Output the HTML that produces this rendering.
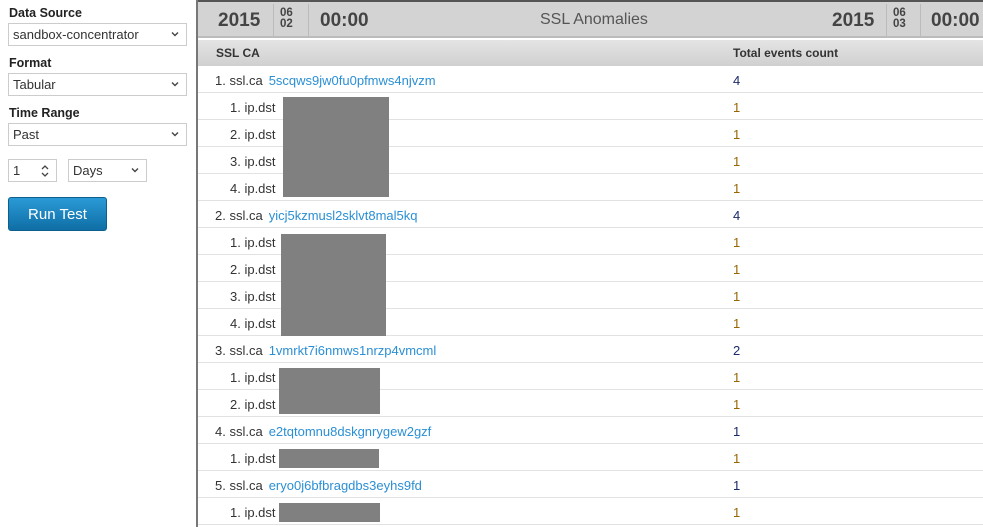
<!DOCTYPE html>
<html><head><meta charset="utf-8"><style>
*{margin:0;padding:0;box-sizing:border-box}
body{width:983px;height:527px;overflow:hidden;background:#fff;font-family:"Liberation Sans",sans-serif;color:#333;position:relative}
.lbl{position:absolute;left:9px;font-weight:bold;font-size:12.5px;color:#222}
.sel{position:absolute;border:1px solid #ccc;background:#fff;font-size:13px;color:#333;padding:0 0 0 4px;line-height:21px;height:23px}
.sel .ch{position:absolute;right:5px;top:4px;width:12px;height:12px}
.btn{position:absolute;left:8px;top:197px;width:99px;height:34px;border-radius:3px;background:linear-gradient(#2a9ad6,#0f6ea5);color:#fff;font-size:15px;text-align:center;line-height:34px;border:1px solid #0d5f8e}
.side{position:absolute;left:196px;top:0;width:2px;height:527px;background:#777}
.top{position:absolute;left:198px;top:0;width:785px;height:38px;background:#d3d3d3;border-top:2px solid #555;border-bottom:2px solid #bbb}
.yr{position:absolute;font-weight:bold;font-size:19px;color:#444;top:8px}
.md{position:absolute;font-weight:bold;font-size:11.5px;color:#444;line-height:11px;top:6px;text-align:center}
.vs{position:absolute;top:2px;width:1px;height:32px;background:#bbb}
.th{position:absolute;left:198px;top:40px;width:785px;height:26px;background:linear-gradient(#e4e4e4,#d0d0d0);font-weight:bold;font-size:12px;color:#333;line-height:27px}
.row{position:absolute;left:198px;width:785px;height:27px;border-bottom:1px solid #e2e2e2;font-size:13px;line-height:29px}
.row .a{position:absolute;color:#333}
.row .l{color:#2a8fd4;margin-left:6px}
.row .c{position:absolute;left:535px}
.box{position:absolute;background:#808080}
</style></head><body>
<svg width="0" height="0" style="position:absolute"><defs><symbol id="cv" viewBox="0 0 12 12"><path d="M3 4.5 L6 7.5 L9 4.5" fill="none" stroke="#444" stroke-width="1.4"/></symbol></defs></svg>
<div class="lbl" style="top:6px">Data Source</div>
<div class="sel" style="left:8px;top:23px;width:179px">sandbox-concentrator<svg class="ch"><use href="#cv"/></svg></div>
<div class="lbl" style="top:56px">Format</div>
<div class="sel" style="left:8px;top:73px;width:179px">Tabular<svg class="ch"><use href="#cv"/></svg></div>
<div class="lbl" style="top:106px">Time Range</div>
<div class="sel" style="left:8px;top:123px;width:179px">Past<svg class="ch"><use href="#cv"/></svg></div>
<div class="sel" style="left:8px;top:159px;width:49px">1<svg style="position:absolute;right:5px;top:3px" width="12" height="16"><path d="M3 6 L6 3 L9 6 M3 10 L6 13 L9 10" fill="none" stroke="#444" stroke-width="1.3"/></svg></div>
<div class="sel" style="left:68px;top:159px;width:79px">Days<svg class="ch"><use href="#cv"/></svg></div>
<div class="btn">Run Test</div>
<div class="side"></div>
<div class="top">
<div class="yr" style="left:20px">2015</div>
<div class="vs" style="left:75px"></div>
<div class="md" style="left:82px">06<br>02</div>
<div class="vs" style="left:110px"></div>
<div class="yr" style="left:122px">00:00</div>
<div style="position:absolute;left:342px;top:9px;font-size:16px;color:#555">SSL Anomalies</div>
<div class="yr" style="left:634px">2015</div>
<div class="vs" style="left:688px"></div>
<div class="md" style="left:695px">06<br>03</div>
<div class="vs" style="left:722px"></div>
<div class="yr" style="left:733px">00:00</div>
</div>
<div class="th"><span style="position:absolute;left:18px">SSL CA</span><span style="position:absolute;left:535px">Total events count</span></div>

<div class="row" style="top:66px"><span class="a" style="left:17px">1. ssl.ca<span class="l">5scqws9jw0fu0pfmws4njvzm</span></span><span class="c" style="color:#1a2a6a">4</span></div>
<div class="row" style="top:93px"><span class="a" style="left:32px">1. ip.dst</span><span class="c" style="color:#9a6400">1</span></div>
<div class="row" style="top:120px"><span class="a" style="left:32px">2. ip.dst</span><span class="c" style="color:#9a6400">1</span></div>
<div class="row" style="top:147px"><span class="a" style="left:32px">3. ip.dst</span><span class="c" style="color:#9a6400">1</span></div>
<div class="row" style="top:174px"><span class="a" style="left:32px">4. ip.dst</span><span class="c" style="color:#9a6400">1</span></div>
<div class="row" style="top:201px"><span class="a" style="left:17px">2. ssl.ca<span class="l">yicj5kzmusl2sklvt8mal5kq</span></span><span class="c" style="color:#1a2a6a">4</span></div>
<div class="row" style="top:228px"><span class="a" style="left:32px">1. ip.dst</span><span class="c" style="color:#9a6400">1</span></div>
<div class="row" style="top:255px"><span class="a" style="left:32px">2. ip.dst</span><span class="c" style="color:#9a6400">1</span></div>
<div class="row" style="top:282px"><span class="a" style="left:32px">3. ip.dst</span><span class="c" style="color:#9a6400">1</span></div>
<div class="row" style="top:309px"><span class="a" style="left:32px">4. ip.dst</span><span class="c" style="color:#9a6400">1</span></div>
<div class="row" style="top:336px"><span class="a" style="left:17px">3. ssl.ca<span class="l">1vmrkt7i6nmws1nrzp4vmcml</span></span><span class="c" style="color:#1a2a6a">2</span></div>
<div class="row" style="top:363px"><span class="a" style="left:32px">1. ip.dst</span><span class="c" style="color:#9a6400">1</span></div>
<div class="row" style="top:390px"><span class="a" style="left:32px">2. ip.dst</span><span class="c" style="color:#9a6400">1</span></div>
<div class="row" style="top:417px"><span class="a" style="left:17px">4. ssl.ca<span class="l">e2tqtomnu8dskgnrygew2gzf</span></span><span class="c" style="color:#1a2a6a">1</span></div>
<div class="row" style="top:444px"><span class="a" style="left:32px">1. ip.dst</span><span class="c" style="color:#9a6400">1</span></div>
<div class="row" style="top:471px"><span class="a" style="left:17px">5. ssl.ca<span class="l">eryo0j6bfbragdbs3eyhs9fd</span></span><span class="c" style="color:#1a2a6a">1</span></div>
<div class="row" style="top:498px"><span class="a" style="left:32px">1. ip.dst</span><span class="c" style="color:#9a6400">1</span></div>

<div class="box" style="left:283px;top:97px;width:106px;height:100px"></div>
<div class="box" style="left:281px;top:234px;width:105px;height:102px"></div>
<div class="box" style="left:279px;top:368px;width:101px;height:46px"></div>
<div class="box" style="left:279px;top:449px;width:100px;height:19px"></div>
<div class="box" style="left:279px;top:503px;width:101px;height:19px"></div>
</body></html>
